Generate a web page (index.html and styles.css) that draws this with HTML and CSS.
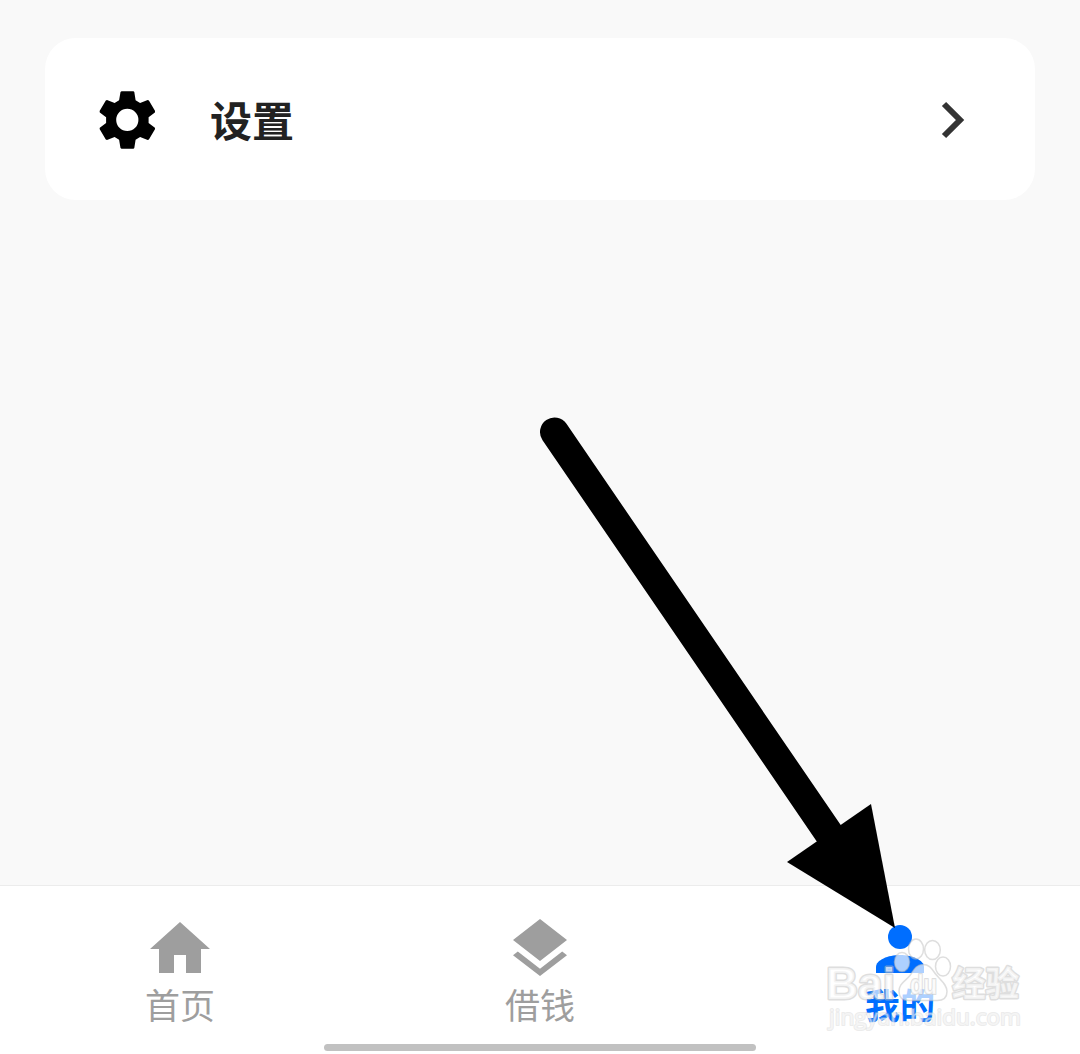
FILE: index.html
```html
<!DOCTYPE html>
<html lang="zh-CN">
<head>
<meta charset="utf-8">
<title>我的</title>
<link rel="stylesheet" href="styles.css">
</head>
<body>
<div class="screen">
  <main class="content">
    <a class="setting-row">
      <svg class="gear" viewBox="0 0 58 60" aria-hidden="true">
        <path fill-rule="evenodd" d="M22.5 1.2h12l.8.8 1.3 8.3 4.500 2.800 7.600-3 1.200.400 6.200 10.600-.200 1.300-6.300 4.900v5.600l6.300 4.800.200 1.200-6.200 10.600-1.200.500-7.600-3-4.500 2.700-1.300 8.300-.800.800h-12l-1-.800-1.400-8.300-4.500-2.700-7.600 3-1.200-.500L.6 39l.2-1.300 6.300-4.800v-5.600L.8 22.400l-.2-1.300 6.200-10.600 1.200-.4 7.600 3 4.500-2.800L21.500 2zM28.300 18.800a11.100 11.100 0 1 0 0 22.200 11.100 11.100 0 0 0 0-22.200z"/>
      </svg>
      <span class="setting-label">设置</span>
      <svg class="chevron" viewBox="0 0 24 38" aria-hidden="true"><path d="M3 3l16 16L3 35"/></svg>
    </a>
  </main>
  <nav class="tabbar">
    <a class="tab">
      <svg class="tab-icon" viewBox="0 0 60 60" aria-hidden="true"><path d="M30 4l30 27h-9v24H36V37H24v18H9V31H0z"/></svg>
      <span>首页</span>
    </a>
    <a class="tab">
      <svg class="tab-icon" viewBox="0 0 60 60" aria-hidden="true"><path d="M30 1l27 21-27 21L3 22zM7.8 33.5L30 50.7l22.2-17.2L57 37.2 30 58 3 37.2z"/></svg>
      <span>借钱</span>
    </a>
    <a class="tab tab-active">
      <svg class="tab-icon" viewBox="0 0 60 60" aria-hidden="true"><circle cx="30" cy="19" r="12"/><path d="M6 55v-6c0-7 12-12 24-12s24 5 24 12v6z"/></svg>
      <span>我的</span>
    </a>
  </nav>
  <div class="home-indicator"></div>

  <svg class="pointer" viewBox="0 0 1080 1054" aria-hidden="true">
    <path class="pointer-shaft" d="M554.5 432L832 838"/>
    <path d="M871 804l24 124-108-66z"/>
  </svg>

  <svg class="watermark" viewBox="0 0 210 104" aria-hidden="true">
    <ellipse cx="82" cy="32" rx="7.5" ry="9.5"/>
    <ellipse class="toe-clear" cx="96" cy="19" rx="7.5" ry="10"/>
    <ellipse cx="112.5" cy="20" rx="7.8" ry="9.5"/>
    <ellipse cx="123" cy="36.5" rx="7.5" ry="9.5"/>
    <path d="M103 34.5c7 0 9 5 13 10 5 6 11 10 11 17 0 6-4 9-10 9H89c-7 0-10-4-10-9 0-8 6-10 11-16 4-6 6-11 13-11z"/>
    <text class="mark-brand" x="6" y="69" textLength="69" lengthAdjust="spacingAndGlyphs">Bai</text>
    <text class="mark-du" x="90" y="64" textLength="27" lengthAdjust="spacingAndGlyphs">du</text>
    <text class="mark-cn" x="132" y="66" textLength="67" lengthAdjust="spacingAndGlyphs">经验</text>
    <text class="mark-url" x="9" y="94.5" textLength="192" lengthAdjust="spacingAndGlyphs">jingyan.baidu.com</text>
  </svg>
</div>
</body>
</html>
```
FILE: styles.css
```css
* {
  box-sizing: border-box;
}

body {
  margin: 0;
  background: #fff;
  font-family: "Noto Sans CJK SC", sans-serif;
}

.screen {
  position: relative;
  display: flex;
  flex-direction: column;
  width: 1080px;
  height: 1054px;
  overflow: hidden;
}

.content {
  flex: 1;
  padding: 38px 45px;
  background: #f9f9f9;
}

.setting-row {
  display: flex;
  align-items: center;
  height: 162px;
  padding: 2px 70px 0 54px;
  border-radius: 31px;
  background: #fff;
}

.gear {
  width: 58px;
  height: 60px;
}

.setting-label {
  flex: 1;
  margin-left: 53px;
  padding-bottom: 2px;
  color: #222;
  font-size: 42px;
  font-weight: 700;
  line-height: 60px;
}

.chevron {
  width: 24px;
  height: 38px;
  fill: none;
  stroke: #333;
  stroke-width: 6;
}

.tabbar {
  display: grid;
  grid-template-columns: repeat(3, 1fr);
  height: 159px;
  padding-top: 32px;
  border-top: 1px solid #ececec;
  background: #fff;
}

.tab {
  display: flex;
  flex-direction: column;
  align-items: center;
  color: #9e9e9e;
  font-size: 35px;
  line-height: 52px;
}

.tab-icon {
  width: 60px;
  height: 60px;
  fill: currentColor;
}

.tab-active {
  color: #006eff;
  font-weight: 700;
}

.home-indicator {
  width: 432px;
  height: 7px;
  margin: 0 auto 3px;
  border-radius: 4px;
  background: #c1c1c1;
}

.pointer {
  position: absolute;
  inset: 0;
  width: 1080px;
  height: 1054px;
}

.pointer-shaft {
  stroke: #000;
  stroke-width: 29;
  stroke-linecap: round;
}

.watermark {
  position: absolute;
  left: 820px;
  top: 930px;
  width: 210px;
  height: 104px;
  fill: rgba(255, 255, 255, 0.68);
  stroke: rgba(190, 190, 190, 0.5);
  stroke-width: 1.5;
}

.watermark .toe-clear {
  fill: rgba(255, 255, 255, 0.3);
}

.watermark text {
  paint-order: stroke;
  font-weight: 700;
  stroke-width: 3;
  stroke-linejoin: round;
}

.watermark .mark-brand {
  font-family: "Liberation Sans", sans-serif;
  font-size: 45px;
}

.watermark .mark-du {
  font-family: "Liberation Sans", sans-serif;
  font-size: 27px;
  stroke-width: 2;
}

.watermark .mark-cn {
  font-size: 34px;
}

.watermark .mark-url {
  font-family: "Open Sans", sans-serif;
  font-size: 22px;
  font-weight: 400;
  fill: rgba(255, 255, 255, 0.5);
  stroke: rgba(205, 205, 205, 0.4);
  stroke-width: 2;
}
```
